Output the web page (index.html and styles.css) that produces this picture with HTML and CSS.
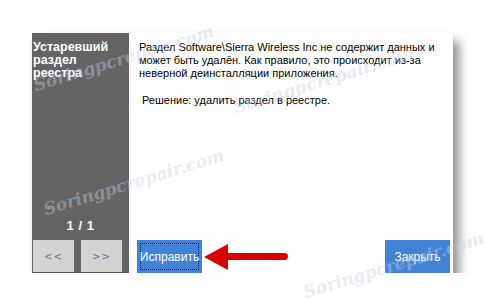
FILE: index.html
```html
<!DOCTYPE html>
<html>
<head>
    <title>Устаревший раздел реестра</title>
    <link rel="stylesheet" href="styles.css">
</head>
<body>

<div class="dialog">
    <div class="sidebar">
        <div class="side-title">Устаревший раздел реестра</div>
        <div class="counter">1 / 1</div>
        <div class="nav">
            <button class="nav-btn">&lt;&lt;</button>
            <button class="nav-btn">&gt;&gt;</button>
        </div>
    </div>
    <div class="content">
        <div class="message">
            <p>Раздел Software\Sierra Wireless Inc не содержит данных и может быть удалён. Как правило, это происходит из-за неверной деинсталляции приложения.</p>
            <p class="solution">Решение: удалить раздел в реестре.</p>
        </div>
        <div class="actions">
            <button class="btn btn-fix"><span class="focus">Исправить</span></button>
            <button class="btn">Закрыть</button>
        </div>
    </div>
</div>

<!-- red arrow pointing at the fix button -->
<svg class="arrow" width="90" height="30" viewBox="0 0 90 30">
    <polygon points="0,15 24,2 24,28" fill="#d90000"/>
    <rect x="22" y="11" width="62" height="7" rx="3.5" fill="#d90000"/>
</svg>

<div class="watermark wm1">Soringpcrepair.com</div>
<div class="watermark wm2">Soringpcrepair.com</div>
<div class="watermark wm3">Soringpcrepair.com</div>
<div class="watermark wm4">Soringpcrepair.com</div>

</body>
</html>
```

FILE: styles.css
```css
body {
    margin: 0;
    background: #fff;
    font-family: 'Liberation Sans', Arial, sans-serif;
    font-size: 11px;
    color: #000;
    overflow: hidden;
}

.dialog {
    display: flex;
    margin: 33px 0 0 32px;
    width: 421px;
    height: 240px;
    box-shadow: 6px 8px 10px rgba(0, 0, 0, 0.45);
}

.sidebar {
    width: 97px;
    background: #646464;
    display: flex;
    flex-direction: column;
    border-bottom: 1px solid #555;
    box-sizing: border-box;
}

.side-title {
    color: #fff;
    font-weight: bold;
    font-size: 12.5px;
    line-height: 13px;
    padding: 8px 16px 0 1px;
    flex: 1;
}

.counter {
    color: #fff;
    font-weight: bold;
    font-size: 13px;
    text-align: center;
    padding-bottom: 7px;
    letter-spacing: 0.5px;
}

.nav {
    display: flex;
    gap: 7px;
    padding: 0 0 0 1px;
}

.nav-btn {
    width: 41px;
    height: 32px;
    border: none;
    background: #d3d3d3;
    color: #6a6a80;
    font-family: 'DejaVu Sans', sans-serif;
    font-size: 10px;
    letter-spacing: 1px;
    padding: 0;
}

.content {
    flex: 1;
    background: #fff;
    display: flex;
    flex-direction: column;
    padding: 8px 3px 0 8px;
}

.message {
    flex: 1;
    padding: 0 10px 0 2px;
    line-height: 13px;
}

.message p {
    margin: 0 0 14px 0;
}

.solution {
    padding-left: 3px;
}

.actions {
    display: flex;
    justify-content: space-between;
}

.btn {
    width: 65px;
    height: 33px;
    border: none;
    background: #4183d7;
    color: #fff;
    font-family: 'Liberation Sans', Arial, sans-serif;
    font-size: 12px;
    padding: 3px;
    display: flex;
    align-items: center;
    justify-content: center;
}

.btn-fix .focus {
    display: flex;
    align-items: center;
    justify-content: center;
    width: 100%;
    height: 100%;
    border: 1px dotted #111;
    box-sizing: border-box;
}

.arrow {
    position: absolute;
    left: 204px;
    top: 242px;
}

.watermark {
    position: absolute;
    font-family: 'DejaVu Serif', serif;
    font-style: italic;
    font-weight: bold;
    font-size: 17px;
    color: #c9cde6;
    opacity: 0.4;
    transform: rotate(-17deg);
    white-space: nowrap;
    pointer-events: none;
}

.wm1 { left: 30px; top: 48px; }
.wm2 { left: 230px; top: 70px; }
.wm3 { left: 40px; top: 172px; }
.wm4 { left: 300px; top: 255px; }
```
